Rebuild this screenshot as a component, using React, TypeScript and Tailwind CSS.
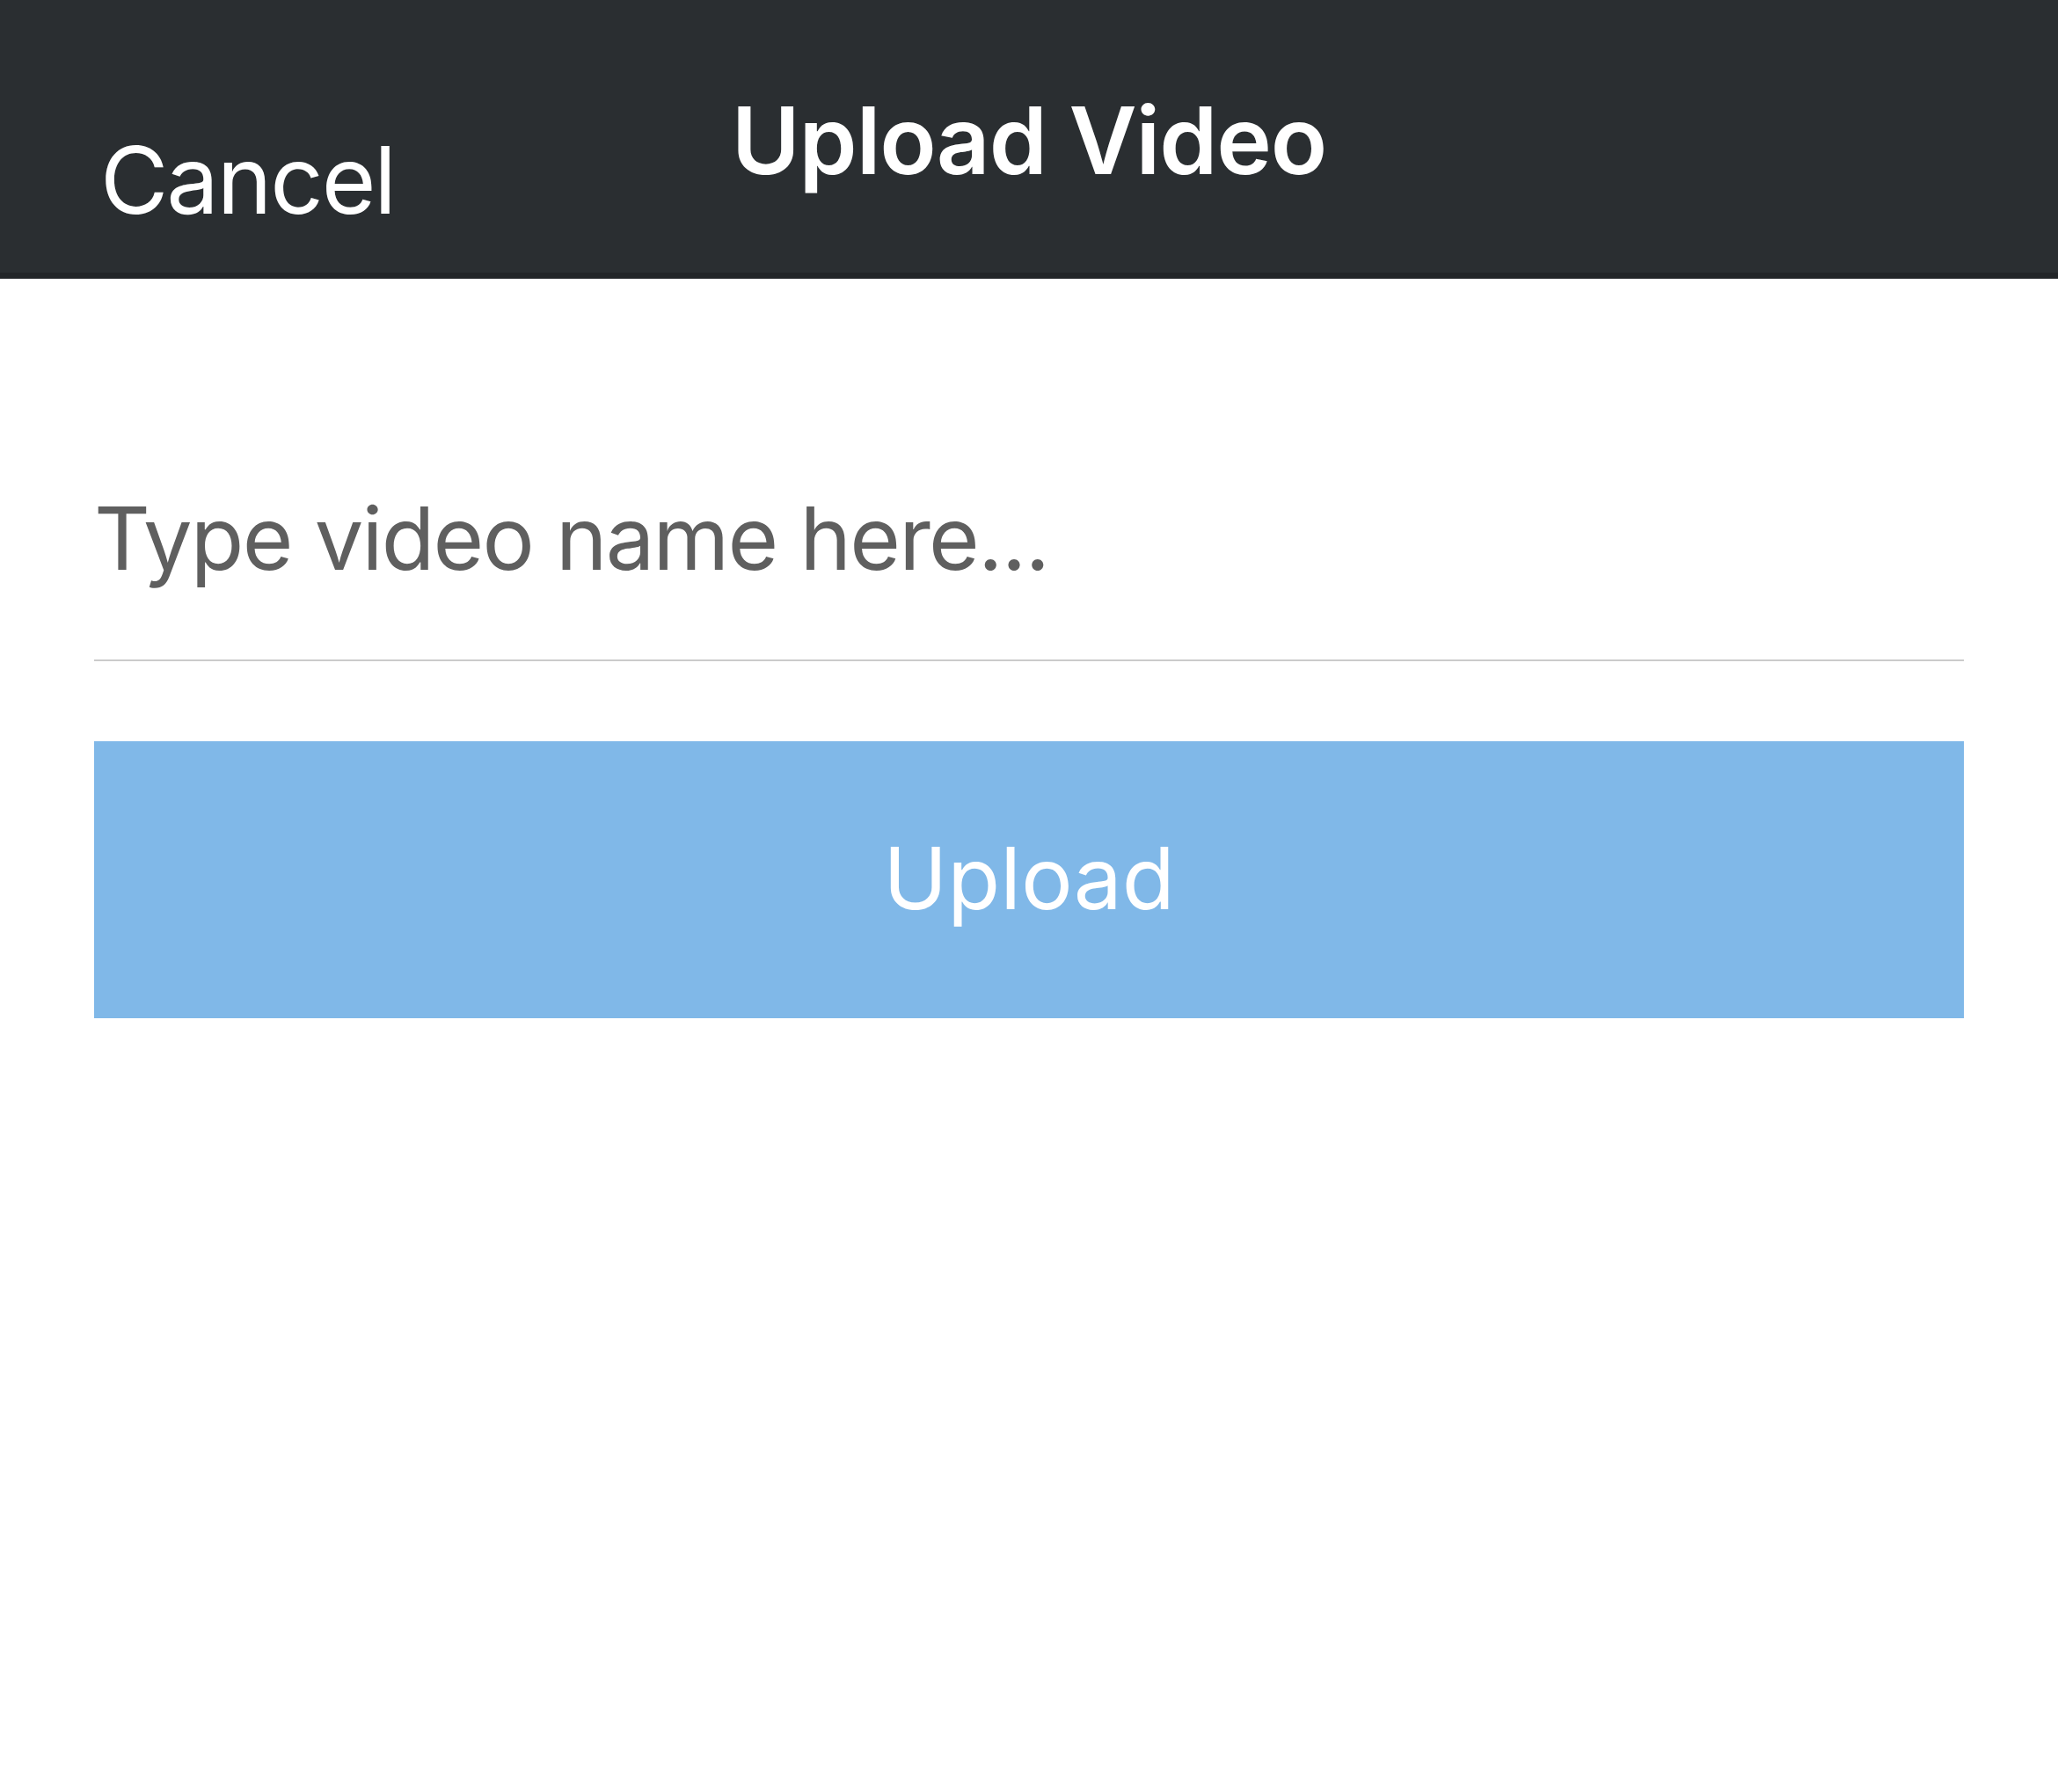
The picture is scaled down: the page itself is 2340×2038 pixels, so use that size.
import { useState } from "react";

const font = { fontFamily: "Inter, 'Noto Sans', sans-serif" };

function NavBar() {
  return (
    <header className="grid h-[317px] grid-cols-[1fr_auto_1fr] border-b-[7px] border-[#222528] bg-[#2a2e31] text-white">
      <button type="button" className="justify-self-start pl-[114px] pt-[99px] text-left text-[106px] leading-none font-normal tracking-[-0.02em]">
        Cancel
      </button>
      <h1 className="pt-[107px] text-[106px] leading-none font-semibold tracking-[-0.01em]">Upload Video</h1>
      <div />
    </header>
  );
}

export default function App() {
  const [name, setName] = useState("");

  return (
    <div className="min-h-[2038px] w-[2340px] bg-white" style={font}>
      <NavBar />

      <main className="px-[107px] pt-[235px]">
        <div className="border-b-2 border-[#cbcbcb] pb-[78px]">
          <input
            value={name}
            onChange={(e) => setName(e.target.value)}
            placeholder="Type video name here..."
            className="block h-[120px] w-full bg-transparent text-[99px] tracking-[-0.018em] text-[#333] outline-none placeholder:text-[#5f5f5f]"
          />
        </div>

        <button
          type="button"
          className="mt-[91px] flex h-[315px] w-full items-center justify-center bg-[#80b8e8] pb-[4px] text-[98px] leading-none text-white"
        >
          Upload
        </button>
      </main>
    </div>
  );
}
